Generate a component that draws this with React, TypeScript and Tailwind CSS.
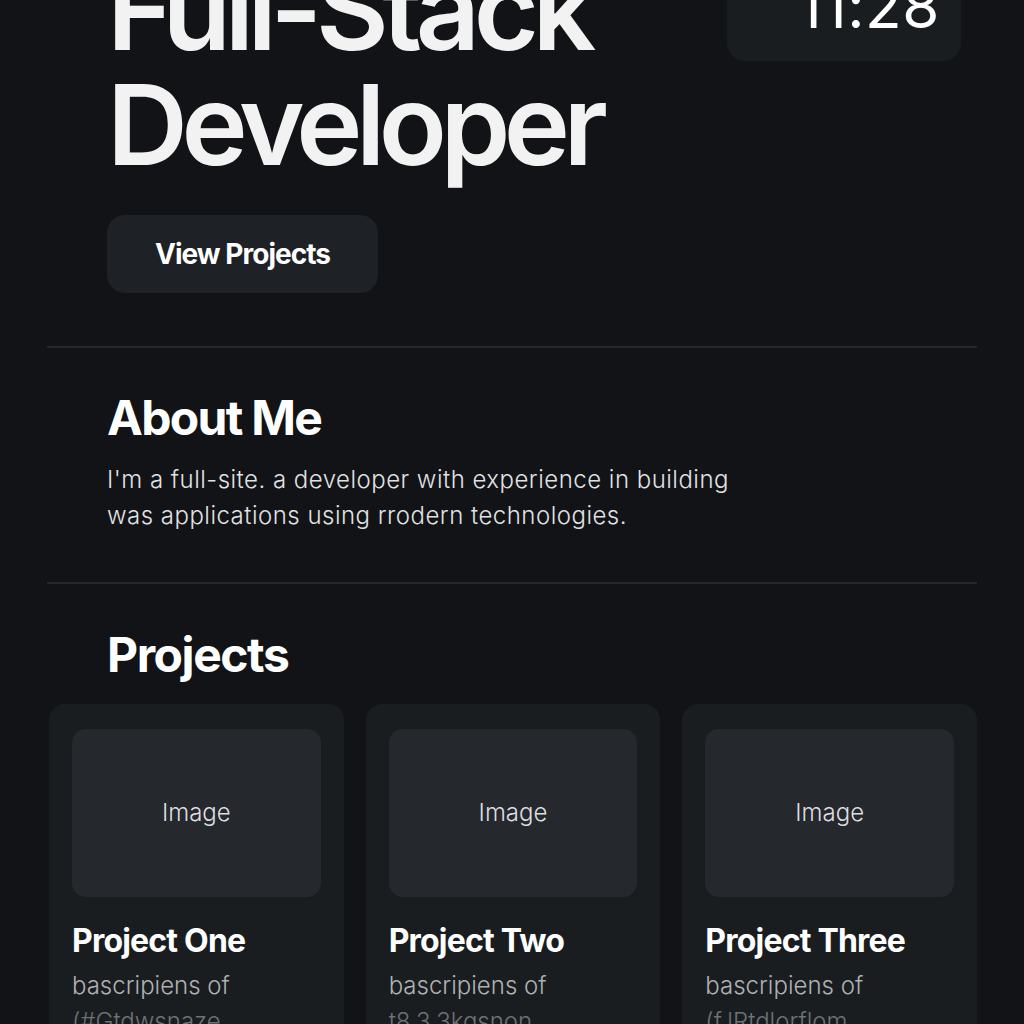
const projects = [
  { title: 'Project One', desc: 'bascripiens of', extra: '(#Gtdwsnaze' },
  { title: 'Project Two', desc: 'bascripiens of', extra: 't8.3.3kgsnon' },
  { title: 'Project Three', desc: 'bascripiens of', extra: '(f.lRtdlorflom' },
];

const font = { fontFamily: 'Inter, "Noto Sans", sans-serif' };

export default function App() {
  return (
    <div className="min-h-screen bg-[#111316] text-[#f2f2f2] overflow-hidden" style={font}>
      <main className="w-[930px] mx-auto -mt-[60px]">
        {/* Hero */}
        <section className="flex items-start justify-between pl-[60px] pr-[16px]">
          <div className="pt-[12px]">
            <h1 className="text-[112px] leading-[115px] font-semibold tracking-[-0.058em] text-[#f2f2f2]">
              Full-Stack
              <br />
              Developer
            </h1>
            <button className="mt-[33px] w-[271px] h-[78px] rounded-[18px] bg-[#1e2125] text-[28px] font-bold tracking-[-0.035em] text-white">
              View Projects
            </button>
          </div>
          <div className="w-[234px] h-[121px] rounded-[18px] bg-[#1a1d20] flex items-end justify-end pr-[21px] pb-[25px]">
            <span className="text-[60px] leading-none font-normal tracking-[0.01em] text-white">11:28</span>
          </div>
        </section>

        <div className="mt-[53px] h-[2px] bg-[#24272b]" />

        {/* About */}
        <section className="pl-[60px] pt-[41px] pb-[48px]">
          <h2 className="text-[48px] leading-[58px] font-bold tracking-[-0.035em] text-white">About Me</h2>
          <p className="mt-[15px] max-w-[660px] text-[24px] leading-[36px] font-light tracking-[0.02em] text-[#e0e2e4]">
            I'm a full-site. a developer with experience in building was applications using rrodern technologies.
          </p>
        </section>

        <div className="h-[2px] bg-[#24272b]" />

        {/* Projects */}
        <section className="pt-[42px]">
          <h2 className="pl-[60px] text-[48px] leading-[58px] font-bold tracking-[-0.03em] text-white">Projects</h2>
          <div className="mt-[20px] grid grid-cols-3 gap-[22px] pl-[2px]">
            {projects.map((p) => (
              <div key={p.title} className="rounded-[16px] bg-[#1a1d20] px-[23px] pt-[25px] pb-[30px]">
                <div className="h-[168px] rounded-[14px] bg-[#25282c] flex items-center justify-center">
                  <span className="text-[24px] font-light text-[#dcdee0]">Image</span>
                </div>
                <h3 className="mt-[24px] text-[32px] leading-[40px] font-bold tracking-tight text-white">{p.title}</h3>
                <p className="mt-[7px] text-[24px] leading-[36px] font-light text-[#aeb1b4]">
                  {p.desc}
                  <br />
                  <span className="text-[#6e7175]">{p.extra}</span>
                </p>
              </div>
            ))}
          </div>
        </section>
      </main>
    </div>
  );
}
